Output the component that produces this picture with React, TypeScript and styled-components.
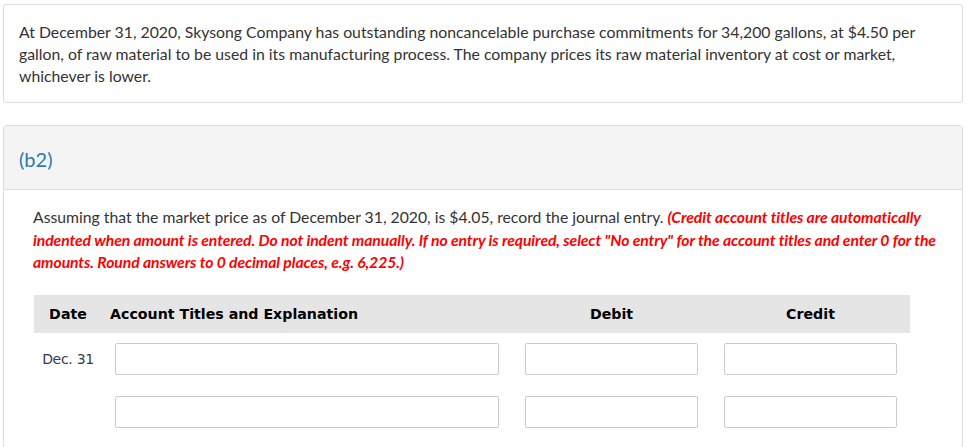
import React from "react";
import styled, { createGlobalStyle } from "styled-components";

const Global = createGlobalStyle`
  html, body { margin: 0; padding: 0; background: #ffffff; }
  body { font-family: Lato, "Noto Sans", sans-serif; color: #333333; }
  * { box-sizing: border-box; }
`;

const Page = styled.div`
  display: flex;
  flex-direction: column;
  gap: 22px;
  padding: 4px 4px 0 3px;
  width: 967px;
`;

const Card = styled.section`
  border: 1px solid #dcdcdc;
  border-radius: 3px;
  background: #ffffff;
`;

const Intro = styled.p`
  margin: 0;
  padding: 16px 30px 15px 15px;
  font-size: 15.8px;
  line-height: 22px;
  color: #333333;
`;

const PartHeader = styled.header`
  height: 64px;
  background: #f4f4f4;
  border-bottom: 1px solid #dcdcdc;
  display: flex;
  align-items: center;
  padding: 2px 0 0 15px;
  font-size: 20px;
  color: #2b7ab3;
`;

const PartBody = styled.div`
  padding: 16px 20px 20px 29px;
  display: flex;
  flex-direction: column;
  gap: 21px;
`;

const Question = styled.p`
  margin: 0;
  font-size: 15.75px;
  line-height: 22.5px;
  color: #333333;
`;

const Warn = styled.span`
  color: #ff0000;
  font-weight: 700;
  font-style: italic;
  letter-spacing: -0.1px;
`;

const Table = styled.div`
  width: 876px;
  margin-left: 1px;
  display: grid;
  grid-template-columns: 68px 410px 199px 199px;
  row-gap: 21px;
`;

const HeadRow = styled.div`
  display: contents;
`;

const HeadCell = styled.div<{ $align: "left" | "center" }>`
  background: #e5e5e5;
  height: 38px;
  display: flex;
  align-items: center;
  justify-content: ${(p) => (p.$align === "center" ? "center" : "flex-start")};
  padding-left: ${(p) => (p.$align === "center" ? "0" : "8px")};
  font-family: "DejaVu Sans", Verdana, sans-serif;
  font-weight: 700;
  font-size: 14.2px;
  color: #000000;
  margin-bottom: -11px;
`;

const DateCell = styled.div`
  display: flex;
  align-items: center;
  justify-content: center;
  height: 32px;
  font-family: "DejaVu Sans", Tahoma, sans-serif;
  font-size: 14px;
  letter-spacing: -0.3px;
  color: #333d4a;
`;

const InputCell = styled.div`
  padding: 0 13px;
`;

const Field = styled.input`
  display: block;
  width: 100%;
  height: 32px;
  border: 1px solid #cccccc;
  border-radius: 2px;
  background: #ffffff;
  outline: none;
`;

const rows = [{ date: "Dec. 31" }, { date: "" }];

export default function App() {
  return (
    <>
      <Global />
      <Page>
        <Card>
          <Intro>
            At December 31, 2020, Skysong Company has outstanding noncancelable purchase commitments for 34,200 gallons, at $4.50 per
            gallon, of raw material to be used in its manufacturing process. The company prices its raw material inventory at cost or market,
            whichever is lower.
          </Intro>
        </Card>
        <Card>
          <PartHeader>(b2)</PartHeader>
          <PartBody>
            <Question>
              Assuming that the market price as of December 31, 2020, is $4.05, record the journal entry.{" "}
              <Warn>
                (Credit account titles are automatically indented when amount is entered. Do not indent manually. If no entry is required,
                select "No entry" for the account titles and enter 0 for the amounts. Round answers to 0 decimal places, e.g. 6,225.)
              </Warn>
            </Question>
            <Table>
              <HeadRow>
                <HeadCell $align="center">Date</HeadCell>
                <HeadCell $align="left">Account Titles and Explanation</HeadCell>
                <HeadCell $align="center">Debit</HeadCell>
                <HeadCell $align="center">Credit</HeadCell>
              </HeadRow>
              {rows.map((r, i) => (
                <React.Fragment key={i}>
                  <DateCell>{r.date}</DateCell>
                  <InputCell><Field type="text" /></InputCell>
                  <InputCell><Field type="text" /></InputCell>
                  <InputCell><Field type="text" /></InputCell>
                </React.Fragment>
              ))}
            </Table>
          </PartBody>
        </Card>
      </Page>
    </>
  );
}
